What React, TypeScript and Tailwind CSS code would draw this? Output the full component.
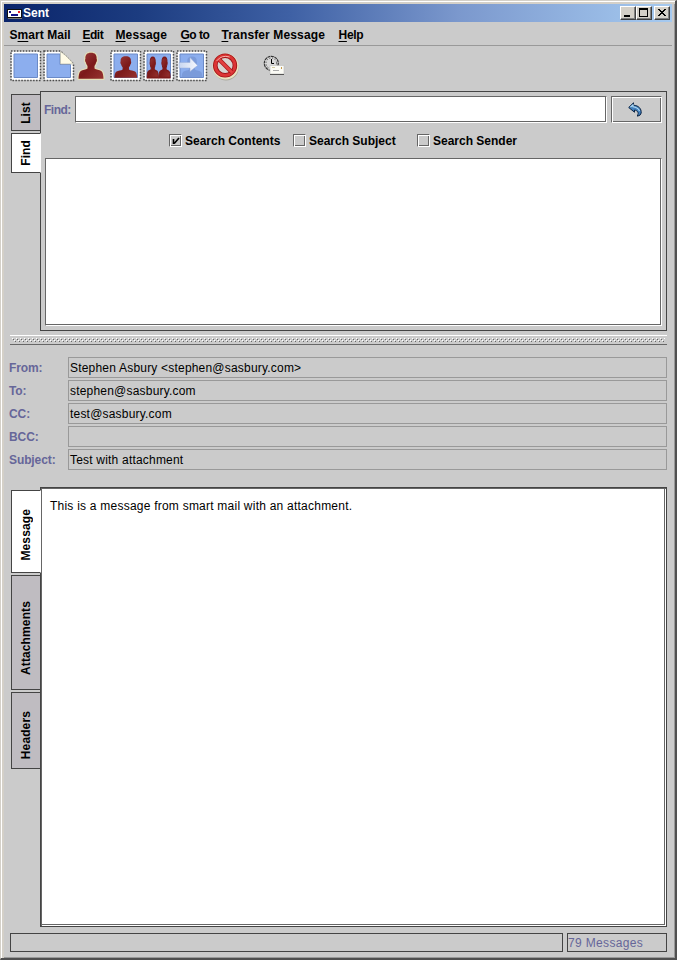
import React from 'react';

function Stamp({ children, cut = false }: { children?: React.ReactNode; cut?: boolean }) {
  const edge = cut ? 'M1 1H17.5L30.5 14V30.5H1Z' : 'M1 1H30.5V30.5H1Z';
  const inner = cut ? 'M4 4H17V14.5H27.5V27.5H4Z' : 'M4 4H27.5V27.5H4Z';
  return (
    <svg width="32" height="32" viewBox="0 0 32 32" className="block shrink-0">
      <path d={edge} fill="#fff" stroke="#c4c4c4" strokeWidth="1" />
      <path d={edge} fill="none" stroke="#4c4c4c" strokeWidth="1.5" strokeDasharray="1.5 1.45" />
      <path d={inner} fill="#8caeee" stroke="#6a8ac8" strokeWidth="1" />
      {cut && <path d="M17.5 1.5V14H30.5L27 10L22 5Z" fill="#fffbe6" stroke="#b5b5a6" strokeWidth=".7" />}
      {children}
    </svg>
  );
}

const BUST =
  'M14.5 2.5C10.5 2.5 8.6 4.6 8.9 8.5C8.3 9 8.5 11.5 9.4 12.3C9.8 14 10.4 15 11 15.6V18.3C9.5 19.6 6 19.6 4.3 20.8C2.5 22 2.1 25.5 2 28.5H27C26.9 25.5 26.5 22 24.7 20.8C23 19.6 19.5 19.6 18 18.3V15.6C18.6 15 19.2 14 19.6 12.3C20.5 11.5 20.7 9 20.1 8.5C20.4 4.6 18.5 2.5 14.5 2.5Z';

function Defs() {
  return (
    <svg width="0" height="0" className="absolute">
      <defs>
        <linearGradient id="red" x1="0" x2="1" y1="0" y2="1">
          <stop offset="0" stopColor="#a04040" />
          <stop offset=".5" stopColor="#7c1a1a" />
          <stop offset="1" stopColor="#963230" />
        </linearGradient>
        <linearGradient id="arrow" x1="0" x2="1">
          <stop offset="0" stopColor="#c8d6f0" />
          <stop offset="1" stopColor="#f6f8fd" />
        </linearGradient>
        <pattern id="grip" width="4" height="4" patternUnits="userSpaceOnUse">
          <rect width="1" height="1" fill="#fff" />
          <rect x="1" y="1" width="1" height="1" fill="#666" />
          <rect x="2" y="2" width="1" height="1" fill="#fff" />
          <rect x="3" y="3" width="1" height="1" fill="#666" />
        </pattern>
      </defs>
    </svg>
  );
}

function Toolbar() {
  return (
    <div className="flex h-[45px] items-start pl-[6px] pt-[4px]">
      <div className="flex gap-px">
        <Stamp />
        <Stamp cut />
        <svg width="33" height="32" viewBox="0 0 33 32" className="block">
          <g transform="translate(.5 .3)">
            <path d={BUST} fill="#eee8ac" stroke="#ece6b2" strokeWidth="2.4" strokeLinejoin="round" opacity=".75" />
            <path d={BUST} fill="url(#red)" />
          </g>
        </svg>
        <Stamp>
          <path d={BUST} fill="url(#red)" transform="translate(2.6 4.2) scale(.91 .83)" />
        </Stamp>
        <Stamp>
          <path d={BUST} fill="url(#red)" transform="translate(3.2 5.4) scale(.45 .78)" stroke="#7c1a1a" strokeWidth="2" />
          <path d={BUST} fill="url(#red)" transform="translate(15 5.4) scale(.45 .78)" stroke="#7c1a1a" strokeWidth="2" />
        </Stamp>
        <Stamp>
          <path d={BUST} fill="#7291d0" opacity=".65" transform="translate(4 4.5) scale(.83 .82)" />
          <path d="M3 12.5H14V7.5L21.5 15.5L14 21.5V18H3Z" fill="url(#arrow)" stroke="#9aaed8" strokeWidth=".5" />
        </Stamp>
        <svg width="33" height="32" viewBox="0 0 33 32" className="block">
          <g transform="translate(.6 0)">
            <circle cx="16.5" cy="18" r="12.5" fill="#8a8871" opacity=".5" />
            <circle cx="16" cy="16.5" r="13" fill="#ebe2c0" />
            <circle cx="15.5" cy="15.5" r="9.8" fill="#d8d4d0" stroke="#9f1518" strokeWidth="4.6" />
            <circle cx="15.5" cy="15.5" r="9.8" fill="none" stroke="#dc3434" strokeWidth="2.8" />
            <path d="M8.8 8.8L22.2 22.2" stroke="#a8181b" strokeWidth="4.2" />
            <path d="M8.5 8.5L22.5 22.5" stroke="#e34040" strokeWidth="2.6" />
            <path d="M7 11Q12 4.5 20 7" stroke="#f7b3ac" strokeWidth="1" fill="none" />
          </g>
        </svg>
      </div>
      <svg width="24" height="24" viewBox="0 0 24 24" className="ml-[20px] mt-[4px] block">
        <circle cx="9.3" cy="9.3" r="7" fill="#d8d8d8" stroke="#333" strokeWidth="1.2" strokeDasharray="3 .6" />
        <circle cx="9.3" cy="9.3" r="5.3" fill="none" stroke="#333" strokeDasharray="1 1.8" />
        <path d="M9.5 5V9.5H12" stroke="#000" fill="none" />
        <path d="M8 11.5H22V20H8Z" fill="#fbfbf5" stroke="#bcbcbc" strokeWidth=".6" />
        <path d="M8 20.5H22" stroke="#555" />
        <path d="M11 16.5H17" stroke="#aaa" />
        <path d="M19.5 13V15" stroke="#c59a50" />
        <path d="M10 13.5H13" stroke="#d4cda2" />
      </svg>
    </div>
  );
}

function Menu({ pre = '', k, rest, w }: { pre?: string; k: string; rest: string; w: string }) {
  return (
    <div className={'shrink-0 whitespace-pre ' + w}>
      {pre}
      <span className="underline decoration-1 underline-offset-[2px] [text-decoration-skip-ink:none]">{k}</span>
      {rest}
    </div>
  );
}

function WinButton({ children, cls = '' }: { children: React.ReactNode; cls?: string }) {
  return (
    <div className={'h-[14px] w-4 border border-b-[#404040] border-l-white border-r-[#404040] border-t-white bg-[#d4d0c8] shadow-[inset_-1px_-1px_#808080] ' + cls}>
      <svg width="14" height="12" viewBox="0 0 14 12" className="block" shapeRendering="crispEdges">
        {children}
      </svg>
    </div>
  );
}

function Tab({ label, size, active = false, pad }: { label: string; size: string; active?: boolean; pad: string }) {
  return (
    <div
      className={
        'relative flex w-[30px] justify-center border border-[#444] ' + size + ' ' + pad + ' ' +
        (active ? 'z-10 border-r-white bg-white' : 'bg-[#bfbcc1]')
      }
    >
      <span className="rotate-180 whitespace-nowrap text-[12px] leading-[14px] tracking-[0.12px] [writing-mode:vertical-rl]">{label}</span>
    </div>
  );
}

function Check({ label, checked = false, w }: { label: string; checked?: boolean; w: string }) {
  return (
    <div className={'flex items-center ' + w}>
      <div className="mr-[3px] h-[13px] w-[13px] border border-[#666] border-b-white border-r-white shadow-[inset_1px_1px_#fff,inset_-1px_-1px_#666]">
        {checked && (
          <svg width="11" height="11" viewBox="0 0 11 11" className="block">
            <path d="M3.5 4V9M4.2 8.5L9 3" stroke="#000" strokeWidth="1.6" fill="none" />
          </svg>
        )}
      </div>
      <span className="whitespace-nowrap">{label}</span>
    </div>
  );
}

const FIELDS = [
  ['From:', 'Stephen Asbury <stephen@sasbury.com>'],
  ['To:', 'stephen@sasbury.com'],
  ['CC:', 'test@sasbury.com'],
  ['BCC:', ''],
  ['Subject:', 'Test with attachment'],
];

export default function App() {
  return (
    <div className="relative flex h-[960px] w-[677px] flex-col border-b-2 border-l border-r-2 border-t border-b-[#505050] border-l-[#d4d0c8] border-r-[#505050] border-t-[#d4d0c8] bg-[#cbcbcb] pl-[3px] pr-[2px] pt-[3px] font-['Liberation_Sans',Arial,sans-serif] text-[12px] font-bold leading-[14px] text-black shadow-[inset_1px_1px_#fff,inset_3px_3px_#d4d0c8,inset_-1px_-1px_#999]">
      <Defs />
      <div className="mr-[1px] flex h-[18px] shrink-0 items-center bg-[linear-gradient(90deg,#0a246a,#1c3c80_20%,#3f61a5_43%,#7b98cd_68%,#a6caf0)] pl-[3px] pr-[2px]">
        <svg width="15" height="10" viewBox="0 0 15 10" className="mt-px" shapeRendering="crispEdges">
          <path d="M0 0H15V9H0Z" fill="#111" />
          <path d="M1 9H15V10H1Z" fill="#777" />
          <path d="M1 1H14V8H1Z" fill="#fff" />
          <path d="M2 2H4V4H2ZM4 5H11V7H4Z" fill="#15158c" />
          <path d="M11 2H13V4H11Z" fill="#e51c24" />
        </svg>
        <span className="ml-px text-white">Sent</span>
        <div className="ml-auto flex">
          <WinButton><path d="M3 8H9V10H3Z" /></WinButton>
          <WinButton><path d="M2 1H11V10H2ZM3 3V9H10V3Z" fillRule="evenodd" /></WinButton>
          <WinButton cls="ml-[2px]"><path d="M3 2H5V3H6V4H8V3H9V2H11V3H10V4H9V5H8V6H9V7H10V8H11V9H9V8H8V7H6V8H5V9H3V8H4V7H5V6H6V5H5V4H4V3H3Z" /></WinButton>
        </div>
      </div>
      <div className="mr-px flex h-6 shrink-0 items-start border-b border-[#999] pl-[5.5px] pt-[6px]">
        <Menu pre="S" k="m" rest="art Mail" w="w-[73px] tracking-[0.05px]" />
        <Menu k="E" rest="dit" w="w-[33px] tracking-[-0.5px]" />
        <Menu k="M" rest="essage" w="w-[65px] tracking-[0.1px]" />
        <Menu k="G" rest="o to" w="w-[41px] tracking-[-0.5px]" />
        <Menu k="T" rest="ransfer Message" w="w-[117px] tracking-[0.13px]" />
        <Menu k="H" rest="elp" w="w-[40px] tracking-[-0.3px]" />
      </div>
      <Toolbar />
      <div className="flex h-[240px] shrink-0 pl-[7px]">
        <div className="-mr-px flex flex-col gap-[2px] pt-[3px]">
          <Tab label="List" size="h-[37px]" pad="items-center" />
          <Tab label="Find" size="h-[40px]" pad="items-center" active />
        </div>
        <div className="w-[627px] border border-[#444] pl-[3px] pt-[4px]">
          <div className="flex h-[27px] items-center">
            <span className="w-[31px] tracking-[-0.5px] text-[#666699]">Find:</span>
            <div className="h-[27px] w-[532px] border border-[#666] border-b-white border-r-white bg-white shadow-[inset_-1px_-1px_#666]" />
            <div className="ml-[4px] flex h-[27px] w-[51px] items-center justify-center border border-[#666] border-b-white border-r-white shadow-[inset_1px_1px_#fff,inset_-1px_-1px_#666]">
              <svg width="15" height="15" viewBox="0 0 15 15" className="mr-[2px]">
                <path d="M.7 5.5L5.5 .8V3.2C10.5 3.5 13.5 6.5 13.2 11Q12.8 13.6 9.5 14.2V13C11 11.5 10 8.5 6.5 8V10.2Z" fill="#4280bd" stroke="#0c2444" strokeWidth="1" />
                <path d="M2.5 5L5 3V4.7C8.5 5 10.5 6.5 11.5 9" stroke="#b3dcf5" fill="none" strokeWidth="1.1" />
              </svg>
            </div>
          </div>
          <div className="flex h-[35px] items-center pl-[125px]">
            <Check label="Search Contents" checked w="w-[124px]" />
            <Check label="Search Subject" w="w-[124px]" />
            <Check label="Search Sender" w="w-[120px]" />
          </div>
          <div className="ml-px h-[168px] w-[617px] border border-[#666] border-b-white border-r-white bg-white shadow-[inset_-1px_-1px_#666]" />
        </div>
      </div>
      <div className="ml-[6px] mt-[4px] h-[10px] w-[657px] shrink-0 border-b border-t border-b-[#666] border-t-white pl-[2px] pt-[2px]">
        <svg width="653" height="4" className="block" shapeRendering="crispEdges"><rect width="653" height="4" fill="url(#grip)" /></svg>
      </div>
      <div className="mt-[12px] flex shrink-0 flex-col gap-[2px] pl-[5px]">
        {FIELDS.map(([name, value]) => (
          <div key={name} className="flex h-[21px] items-center">
            <span className="w-[59px] tracking-[-0.1px] text-[#666699]">{name}</span>
            <div className="flex h-[21px] w-[599px] items-center border border-[#999] pl-px font-normal tracking-[0.2px]">{value}</div>
          </div>
        ))}
      </div>
      <div className="mt-[17px] flex h-[440px] shrink-0 pl-[7px]">
        <div className="-mr-px flex flex-col gap-[2px] pt-[3px]">
          <Tab label="Message" size="h-[83px]" pad="items-end pb-[11px]" active />
          <Tab label="Attachments" size="h-[115px]" pad="items-end pb-[14px]" />
          <Tab label="Headers" size="h-[77px]" pad="items-end pb-[9px]" />
        </div>
        <div className="w-[627px] border border-[#444] bg-white pl-[9px] pt-[11px] font-normal tracking-[0.23px] shadow-[inset_1px_1px_#666,inset_-1px_-1px_#fff,inset_-2px_-2px_#666]">
          This is a message from smart mail with an attachment.
        </div>
      </div>
      <div className="mt-[6px] flex shrink-0 gap-[4px] pl-[6px] font-normal">
        <div className="h-[19px] w-[553px] border border-[#444]" />
        <div className="flex h-[19px] w-[100px] items-center border border-[#444] tracking-[0.35px] text-[#666699]">79 Messages</div>
      </div>
    </div>
  );
}
